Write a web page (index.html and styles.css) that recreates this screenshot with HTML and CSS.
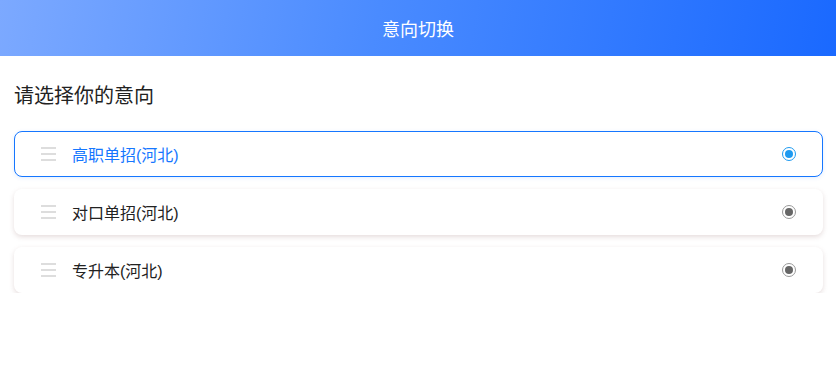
FILE: index.html
```html
<!DOCTYPE html>
<html lang="zh">
<head>
<meta charset="utf-8">
<link rel="stylesheet" href="styles.css">
</head>
<body>
<header class="topbar">意向切换</header>
<main class="content">
  <h2 class="title">请选择你的意向</h2>
  <ul class="list">
    <li class="item active">
      <span class="handle"><i></i><i></i><i></i></span>
      <span class="label">高职单招(河北)</span>
      <span class="radio"></span>
    </li>
    <li class="item">
      <span class="handle"><i></i><i></i><i></i></span>
      <span class="label">对口单招(河北)</span>
      <span class="radio"></span>
    </li>
    <li class="item">
      <span class="handle"><i></i><i></i><i></i></span>
      <span class="label">专升本(河北)</span>
      <span class="radio"></span>
    </li>
  </ul>
</main>
</body>
</html>
```
FILE: styles.css
```css
* { box-sizing: border-box; }
html, body { margin: 0; padding: 0; background: #fff; }
body { font-family: "Liberation Sans", "Noto Sans CJK SC", sans-serif; color: #333; }
.topbar {
  height: 56px;
  display: flex;
  align-items: center;
  justify-content: center;
  color: #fff;
  font-size: 18px;
  background: linear-gradient(100deg, #7ca9ff 0%, #4a8bff 45%, #1a69ff 100%);
}
.content { padding: 0 13px 0 14px; }
.title {
  margin: 24px 0 0;
  font-size: 20px;
  font-weight: 400;
  line-height: 32px;
  color: #222;
}
.list { list-style: none; margin: 19px 0 0; padding: 0; display: flex; flex-direction: column; gap: 12px; }
.item {
  height: 46px;
  display: flex;
  align-items: center;
  padding: 0 26px 0 26px;
  border-radius: 8px;
  border: 1px solid transparent;
  background: #fff;
  box-shadow: 0 2px 5px rgba(140, 100, 100, 0.22);
}
.item.active { border-color: #1677ff; box-shadow: 0 1px 4px rgba(22, 119, 255, 0.12); }
.handle { width: 15px; display: flex; flex-direction: column; gap: 4px; margin-right: 16px; }
.handle i { display: block; height: 2px; background: #ddd; }
.label { flex: 1; font-size: 16px; color: #222; }
.item.active .label { color: #1677ff; }
.radio {
  width: 14px; height: 14px; border-radius: 50%;
  border: 1.5px solid #999;
  display: flex; align-items: center; justify-content: center;
}
.radio::after { content: ""; width: 8px; height: 8px; border-radius: 50%; background: #666; }
.item.active .radio { border-color: #1e9af0; }
.item.active .radio::after { background: #1e9af0; }
```
